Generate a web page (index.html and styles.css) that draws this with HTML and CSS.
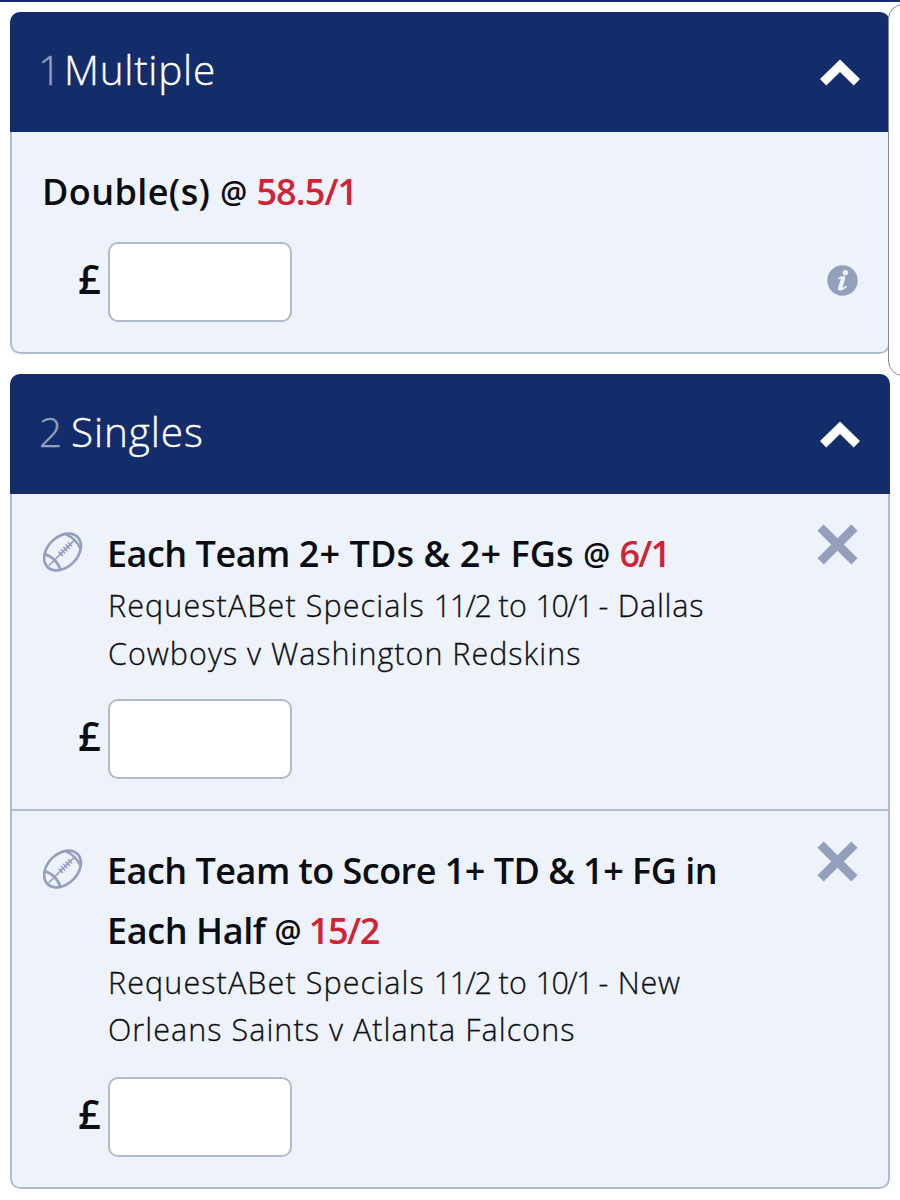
FILE: index.html
```
<!DOCTYPE html>
<html lang="en">
<head>
<meta charset="utf-8">
<title>Bet slip</title>
<link rel="stylesheet" href="styles.css">
</head>
<body>
<svg class="defs" width="0" height="0">
  <symbol id="chevron" viewBox="0 0 40 27"><path d="M20 0.5 40 20 33.7 26.5 20 13 6.3 26.5 0 20Z" fill="#fff"/></symbol>
  <symbol id="cross" viewBox="0 0 41 41"><path d="M0.5 6.7 6.7 0.5 20.5 14.2 34.3 0.5 40.5 6.7 26.8 20.5 40.5 34.3 34.3 40.5 20.5 26.8 6.7 40.5 0.5 34.3 14.2 20.5Z" fill="#939fbb"/></symbol>
  <symbol id="football" viewBox="0 0 40 42">
    <g fill="none" stroke="#939fbb" transform="rotate(-45 19.500 21)">
      <ellipse cx="19.500" cy="21" rx="21.200" ry="15" stroke-width="2.700"/>
      <path d="M5.500 10Q11 21 5.500 32" stroke-width="2.700"/>
      <path d="M34.500 11Q38.500 21 34.500 31" stroke-width="2.300"/>
      <path d="M0 21H36" stroke-width="1.600"/>
      <path d="M17 18v6M20.300 18v6M23.600 18v6M26.900 18v6M30.200 18v6" stroke-width="1.500"/>
    </g>
  </symbol>
</svg>
<div class="top-line"></div>
<main class="slip">
  <section class="card">
    <header class="head"><h2><span class="count c1">1</span><span class="multiple">Multiple</span></h2><svg class="chev"><use href="#chevron"/></svg></header>
    <div class="bet double">
      <h3><span class="double-name">Double(s) <i>@</i></span> <b class="o1">58.5/1</b></h3>
      <div class="stake"><span>£</span><input aria-label="Stake">
        <svg class="info" viewBox="0 0 31 31"><circle cx="15.500" cy="15.500" r="15.200" fill="#939fbb"/><circle cx="18.400" cy="7.800" r="2.700" fill="#eef3fb"/><path d="M10.700 13.400Q14 10.800 17.300 11.100 18.800 11.300 18.300 13.600L15.600 22.200Q15.300 23.700 19.300 20.600L20 21.500Q16.500 25.400 13.200 25.600 10.300 25.600 11.200 22.200L13.700 14.400Q13.800 13 11.300 14.400Z" fill="#eef3fb"/></svg>
      </div>
    </div>
  </section>
  <section class="card">
    <header class="head"><h2><span class="count c2">2</span><span class="singles">Singles</span></h2><svg class="chev"><use href="#chevron"/></svg></header>
    <div class="bet single">
      <svg class="ball"><use href="#football"/></svg>
      <div class="text">
        <h3><span class="team">Each Team </span><span class="t1">2+ TDs &amp; 2+ FGs <i>@</i></span> <b class="o2">6/1</b></h3>
        <p><span class="event">RequestABet Specials </span><span class="range">11/2</span><span class="to"> to </span><span class="range">10/1 </span><span class="place">- Dallas</span><br><span class="p2">Cowboys v Washington Redskins</span></p>
      </div>
      <svg class="cross"><use href="#cross"/></svg>
      <div class="stake"><span>£</span><input aria-label="Stake"></div>
    </div>
    <div class="bet single">
      <svg class="ball"><use href="#football"/></svg>
      <div class="text">
        <h3><span class="t2">Each Team to Score 1+ TD &amp; 1+ FG in</span><br><span class="t3">Each Half <i>@</i></span> <b class="o3">15/2</b></h3>
        <p><span class="event">RequestABet Specials </span><span class="range">11/2</span><span class="to"> to </span><span class="range">10/1 </span><span class="place">- New</span><br><span class="p4">Orleans Saints v Atlanta Falcons</span></p>
      </div>
      <svg class="cross"><use href="#cross"/></svg>
      <div class="stake"><span>£</span><input aria-label="Stake"></div>
    </div>
  </section>
</main>
<div class="side-tab"></div>
</body>
</html>
```
FILE: styles.css
```
* { box-sizing: border-box; }
body { margin: 0; height: 1200px; overflow: hidden; background: #fff; color: #0b0d12; font-family: "Open Sans", "Noto Sans", sans-serif; }
svg { display: block; overflow: visible; }
.defs { position: absolute; }
.top-line { height: 2px; background: #132d6b; }
.slip { padding: 10px 10px 0; display: flex; flex-direction: column; gap: 20px; }
.card { border-radius: 10px; overflow: hidden; background: #eef3fb; }
.head { height: 120px; padding: 0 30px 0 29px; background: #132d6b; color: #fff; display: flex; align-items: center; justify-content: space-between; }
h2, h3, p { margin: 0; white-space: nowrap; }
h2 { font-size: 40.5px; font-weight: 300; line-height: 60px; padding-bottom: 5px; display: flex; -webkit-text-stroke: 0.35px; }
.count { color: #939fbb; }
.c1 { width: 25px; margin-left: -1px; }
.c1 + span { margin-left: 1px; }
.c2 { width: 32px; }
.multiple { letter-spacing: 0.7px; }
.singles { letter-spacing: 0.9px; }
.chev { width: 40px; height: 27px; }
.bet { border: 2px solid #b0bbce; border-top: 0; }
.bet:last-child { border-radius: 0 0 10px 10px; }
.double { height: 222px; padding: 30px 30px 0 30px; }
h3 { font-size: 36px; font-weight: 600; line-height: 60px; }
h3 b { font-weight: 600; color: #cf2336; }
h3 i { font-style: normal; font-size: 30px; line-height: 1; vertical-align: 2.5px; letter-spacing: 0; }
.double-name { letter-spacing: 0.4px; }
.o1 { letter-spacing: -0.9px; }
.team { letter-spacing: -0.5px; }
.t1 { letter-spacing: 0.1px; }
.o2 { letter-spacing: -1.8px; }
.t2 { letter-spacing: -0.52px; }
.t3 { letter-spacing: -0.4px; }
.o3 { letter-spacing: -1.4px; margin-left: -2px; }
p { font-size: 30.5px; font-weight: 300; line-height: 47.5px; margin-top: -2px; -webkit-text-stroke: 0.3px; }
.event { letter-spacing: 1.1px; }
.range { letter-spacing: -1.5px; }
.to { letter-spacing: 0.3px; }
.place { letter-spacing: 0.75px; }
.p2 { letter-spacing: 1px; }
.p4 { letter-spacing: 1.05px; }
.stake { display: flex; align-items: center; height: 80px; }
.stake span { font-size: 40px; font-weight: 600; line-height: 76px; padding-bottom: 6px; width: 30px; }
.stake input { width: 184px; height: 80px; border: 2px solid #b0bbce; border-radius: 10px; background: #fff; padding: 0 12px; font: inherit; }
.double .stake { margin-top: 20px; padding-left: 36px; }
.info { width: 31px; height: 31px; margin-left: auto; margin-top: -3px; }
.single { display: grid; grid-template-columns: 65px 1fr 41px; padding: 30px 30px 30px 31px; }
.ball { width: 40px; height: 42px; margin-top: 7px; }
.cross { width: 41px; height: 41px; }
.text h3 { margin-left: -1px; }
.single .stake { grid-column: 1 / -1; padding-left: 35px; margin-top: 21.5px; }
.single:last-child .stake { margin-top: 23px; }
.side-tab { position: absolute; left: 888px; top: 4px; width: 30px; height: 372px; border: 1px solid #858997; border-radius: 16px; background: #fff; }
```
